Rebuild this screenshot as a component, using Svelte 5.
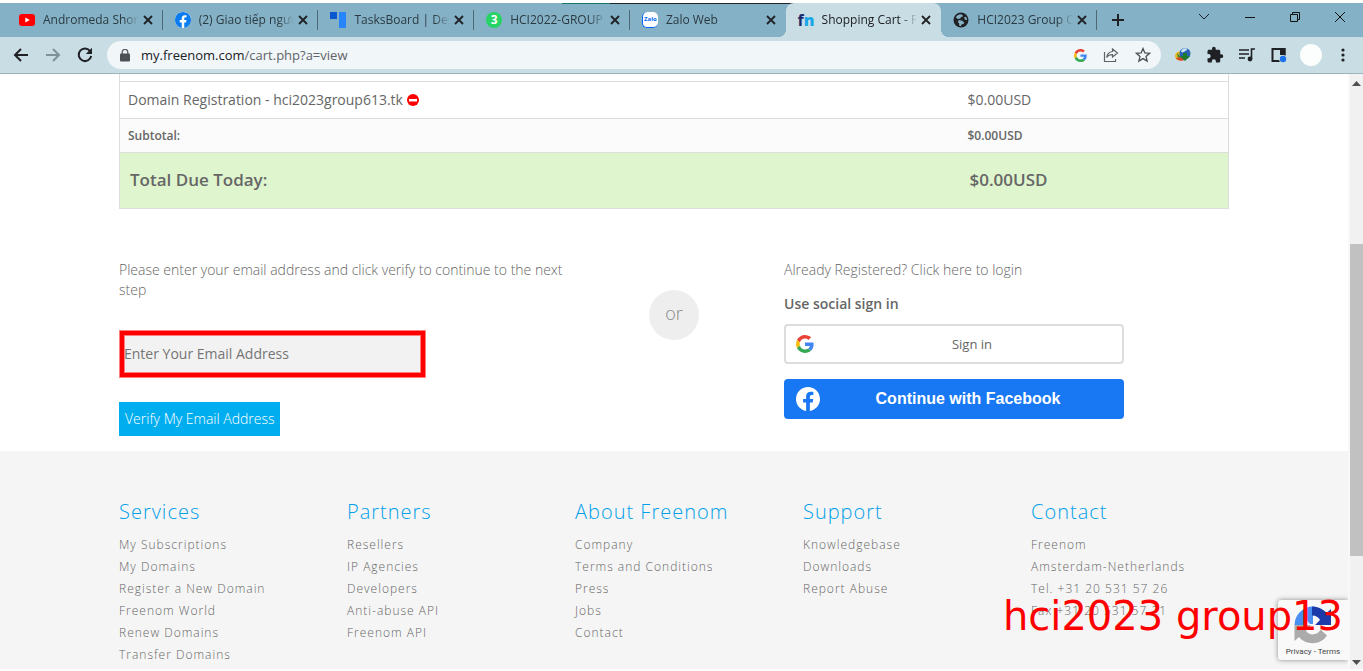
<script>
  const tabs = [
    { title: 'Andromeda Short', icon: 'youtube' },
    { title: '(2) Giao tiếp người', icon: 'facebook' },
    { title: 'TasksBoard | Desk', icon: 'tasks' },
    { title: 'HCI2022-GROUP', icon: 'three' },
    { title: 'Zalo Web', icon: 'zalo' },
    { title: 'Shopping Cart - F', icon: 'freenom', active: true },
    { title: 'HCI2023 Group C', icon: 'globe' },
  ];

  const footer = [
    {
      heading: 'Services',
      links: ['My Subscriptions', 'My Domains', 'Register a New Domain', 'Freenom World', 'Renew Domains', 'Transfer Domains'],
    },
    { heading: 'Partners', links: ['Resellers', 'IP Agencies', 'Developers', 'Anti-abuse API', 'Freenom API'] },
    { heading: 'About Freenom', links: ['Company', 'Terms and Conditions', 'Press', 'Jobs', 'Contact'] },
    { heading: 'Support', links: ['Knowledgebase', 'Downloads', 'Report Abuse'] },
  ];
  const contact = ['Freenom', 'Amsterdam-Netherlands', 'Tel. +31 20 531 57 26', 'Fax +31 20 531 57 21'];

  let email = $state('');
</script>

{#snippet googleLogo(size)}
  <svg width={size} height={size} viewBox="0 0 48 48" aria-hidden="true">
    <path fill="#ea4335" d="M24 9.5c3.54 0 6.71 1.22 9.21 3.6l6.85-6.85C35.9 2.38 30.47 0 24 0 14.62 0 6.51 5.38 2.56 13.22l7.98 6.19C12.43 13.72 17.74 9.5 24 9.5z" />
    <path fill="#4285f4" d="M46.98 24.55c0-1.57-.15-3.09-.38-4.55H24v9.02h12.94c-.58 2.96-2.26 5.48-4.78 7.18l7.73 6c4.51-4.18 7.09-10.36 7.09-17.65z" />
    <path fill="#fbbc05" d="M10.53 28.59c-.48-1.45-.76-2.99-.76-4.59s.27-3.14.76-4.59l-7.98-6.19C.92 16.46 0 20.12 0 24s.92 7.54 2.56 10.78l7.97-6.19z" />
    <path fill="#34a853" d="M24 48c6.48 0 11.93-2.13 15.89-5.81l-7.73-6c-2.15 1.45-4.92 2.3-8.16 2.3-6.26 0-11.57-4.22-13.47-9.91l-7.98 6.19C6.51 42.62 14.62 48 24 48z" />
  </svg>
{/snippet}

{#snippet facebookLogo(size, color)}
  <svg width={size} height={size} viewBox="0 0 24 24" aria-hidden="true">
    <path fill={color} d="M24 12.073C24 5.405 18.627 0 12 0S0 5.405 0 12.073c0 6.026 4.388 11.02 10.125 11.927v-8.437H7.078v-3.49h3.047V9.413c0-3.026 1.792-4.697 4.533-4.697 1.312 0 2.686.236 2.686.236v2.971H15.83c-1.491 0-1.956.93-1.956 1.886v2.264h3.328l-.532 3.49h-2.796V24C19.612 23.093 24 18.1 24 12.073z" />
  </svg>
{/snippet}

<div class="screen">
  <div class="topline"></div>
  <header class="browser">
    <div class="tabstrip">
      <nav class="tabs" aria-label="Tabs">
        {#each tabs as tab}
          <div class="tab" class:active={tab.active}>
            <span class="favicon">
              {#if tab.icon === 'youtube'}
                <svg width="16" height="16" viewBox="0 0 16 16"><rect y="2" width="16" height="12" rx="3" fill="#f00" /><path d="M6.3 5.4v5.2L10.7 8z" fill="#fff" /></svg>
              {:else if tab.icon === 'facebook'}
                <span class="fb-bg">{@render facebookLogo(16, '#0a7cf0')}</span>
              {:else if tab.icon === 'tasks'}
                <svg width="16" height="16" viewBox="0 0 16 16"><path d="M0 0h7v7H0z" fill="#0b57d0" /><path d="M9 0h7v16H9z" fill="#2684fc" /></svg>
              {:else if tab.icon === 'three'}
                <span class="three">3</span>
              {:else if tab.icon === 'zalo'}
                <span class="zalo">Zalo</span>
              {:else if tab.icon === 'freenom'}
                <span class="fn">f<b>n</b></span>
              {:else}
                <svg width="16" height="16" viewBox="0 0 16 16"><circle cx="8" cy="8" r="7.5" fill="#202124" /><path d="M7.5 2.2c-2 .1-3.800 1.500-4.700 3.200l2.100 1.500 2.200-.3 1-1.700 2-.7-.6-1.300zM5.800 8l3.500.8 1.900 1.600-.7 1.600-2 .5-.7 1.800-1.700-.7.1-2.200-1.400-1.500zM11 5.500l2-.8c.7 1 1 2 1 3.300l-2-.3z" fill="#84b1c5" /></svg>
              {/if}
            </span>
            <a class="tab-title" href="#tab">{tab.title}</a>
            <button class="close" aria-label="Close tab">
              <svg width="10" height="10" viewBox="0 0 10 10"><path d="M1 1l8 8M9 1L1 9" stroke="#202124" stroke-width="1.8" /></svg>
            </button>
          </div>
        {/each}
      </nav>
      <div class="window">
        <button class="new" aria-label="New tab">
          <svg width="12" height="12" viewBox="0 0 12 12"><path d="M6 0v12M0 6h12" stroke="#202124" stroke-width="2" /></svg>
        </button>
        <button aria-label="Search tabs"><svg width="12" height="12" viewBox="0 0 12 12"><path d="M1 3l5 5 5-5" fill="none" stroke="#202124" /></svg></button>
        <button aria-label="Minimize"><svg width="12" height="12" viewBox="0 0 12 12"><path d="M1 6.500h10" stroke="#111" /></svg></button>
        <button aria-label="Restore"><svg width="12" height="12" viewBox="0 0 12 12"><path d="M1.500 3.500h7v7h-7zM3.500 3.500v-2h7v7h-2" fill="none" stroke="#111" /></svg></button>
        <button aria-label="Close"><svg width="12" height="12" viewBox="0 0 12 12"><path d="M1 1l10 10M11 1L1 11" stroke="#111" /></svg></button>
      </div>
    </div>

    <div class="toolbar">
      <button aria-label="Back"><svg width="16" height="16" viewBox="0 0 16 16"><path d="M15 8H2M8 2L2 8l6 6" fill="none" stroke="#202124" stroke-width="2" /></svg></button>
      <button aria-label="Forward"><svg width="16" height="16" viewBox="0 0 16 16"><path d="M1 8h13M8 2l6 6-6 6" fill="none" stroke="#81919a" stroke-width="2" /></svg></button>
      <button aria-label="Reload"><svg width="16" height="16" viewBox="0 0 16 16"><path d="M13.200 4.200A6.300 6.300 0 1 0 14.200 9" fill="none" stroke="#202124" stroke-width="2" /><path d="M15 .8V7H8.800z" fill="#202124" /></svg></button>
      <div class="omnibox">
        <svg width="10" height="13" viewBox="0 0 10 13"><path d="M2.200 5V3.200a2.800 2.800 0 0 1 5.600 0V5" fill="none" stroke="#5f6368" stroke-width="1.400" /><rect y="4.500" width="10" height="8" rx="1" fill="#4c5054" /></svg>
        <span class="url">my.freenom.com<span>/cart.php?a=view</span></span>
        {@render googleLogo(13)}
        <svg width="16" height="16" viewBox="0 0 16 16"><path d="M1.500 5v9.500h11V12M9.500 2l5 4-5 4V7.700c-3 0-4.700.8-5.800 2.800.3-3.200 2.300-5.600 5.800-6z" fill="none" stroke="#5f6368" stroke-width="1.200" /></svg>
        <svg width="16" height="16" viewBox="0 0 16 16"><path d="M8 1.500l1.900 4.400 4.700.4-3.600 3.100 1.100 4.700L8 11.600l-4.100 2.500L5 9.400 1.400 6.300l4.700-.4z" fill="none" stroke="#4c5054" stroke-width="1.300" /></svg>
      </div>
      <button aria-label="Download manager">
        <svg width="16" height="16" viewBox="0 0 16 16"><ellipse cx="5" cy="9" rx="5" ry="4.500" fill="#e5b51c" /><path d="M1 11c2 3 6 3.500 9 1.500L8 9z" fill="#d8442b" /><path d="M2 6l5 5-4-1z" fill="#2b8a3a" /><circle cx="10" cy="6.500" r="5.500" fill="#2a62b8" /><path d="M6 4.500c1-3 4-4 6.500-2.500l-2 2-3 1.500z" fill="#c9e6f4" /><path d="M8 6h4v3h3l-5 5-5-5h3z" fill="#1f7a2c" /></svg>
      </button>
      <button aria-label="Extensions">
        <svg width="18" height="18" viewBox="0 0 24 24"><path fill="#202124" d="M20.500 11H19V7c0-1.100-.9-2-2-2h-4V3.500a2.500 2.500 0 0 0-5 0V5H4c-1.100 0-1.990.9-1.990 2v3.800H3.500c1.490 0 2.700 1.210 2.700 2.700s-1.210 2.700-2.700 2.700H2V20c0 1.100.9 2 2 2h3.800v-1.500c0-1.490 1.210-2.700 2.700-2.700s2.700 1.210 2.700 2.700V22H17c1.100 0 2-.9 2-2v-4h1.500a2.500 2.500 0 0 0 0-5z" /></svg>
      </button>
      <button aria-label="Media control">
        <svg width="16" height="16" viewBox="0 0 16 16"><path d="M0 3h10M0 7h10M0 11h6M12.500 12V2H16" fill="none" stroke="#202124" stroke-width="1.600" /><circle cx="11" cy="12" r="2.400" fill="#202124" /></svg>
      </button>
      <button aria-label="Side panel">
        <svg width="16" height="16" viewBox="0 0 16 16"><path d="M1.500 2h12v12h-12z" fill="none" stroke="#202124" stroke-width="2" /><path d="M9 1h5.500v7H9z" fill="#202124" /><circle cx="12" cy="12" r="4" fill="#c8dde4" /><circle cx="12" cy="12" r="3.200" fill="#1a73e8" /></svg>
      </button>
      <button class="avatar" aria-label="Profile"></button>
      <button aria-label="Menu"><svg width="4" height="14" viewBox="0 0 4 14"><g fill="#202124"><circle cx="2" cy="2" r="1.600" /><circle cx="2" cy="7" r="1.600" /><circle cx="2" cy="12" r="1.600" /></g></svg></button>
    </div>
  </header>

  <div class="viewport">
    <div class="page">
      <main class="container">
        <table>
          <tbody>
            <tr class="previous"><td></td><td></td></tr>
            <tr class="item">
              <td>
                Domain Registration - hci2023group613.tk
                <button class="remove" aria-label="Remove">
                  <svg width="12" height="12" viewBox="0 0 12 12"><circle cx="6" cy="6" r="6" fill="#f00" /><path d="M2 5h8v2.500H2z" fill="#fff" /></svg>
                </button>
              </td>
              <td>$0.00USD</td>
            </tr>
            <tr class="subtotal"><td>Subtotal:</td><td>$0.00USD</td></tr>
            <tr class="total"><td>Total Due Today:</td><td>$0.00USD</td></tr>
          </tbody>
        </table>

        <div class="checkout">
          <form class="verify" onsubmit={(e) => e.preventDefault()}>
            <label for="email">Please enter your email address and click verify to continue to the next step</label>
            <input id="email" type="email" placeholder="Enter Your Email Address" bind:value={email} />
            <button type="submit">Verify My Email Address</button>
          </form>
          <div class="or">or</div>
          <section class="social">
            <a href="#login">Already Registered? Click here to login</a>
            <h2>Use social sign in</h2>
            <button class="google">{@render googleLogo(18)}<span>Sign in</span></button>
            <button class="facebook">{@render facebookLogo(24, '#fff')}<span>Continue with Facebook</span></button>
          </section>
        </div>
      </main>

      <footer>
        <div class="container columns">
          {#each footer as column}
            <section>
              <h3>{column.heading}</h3>
              <ul>
                {#each column.links as link}<li><a href="#link">{link}</a></li>{/each}
              </ul>
            </section>
          {/each}
          <section>
            <h3>Contact</h3>
            <ul>
              {#each contact as line}<li>{line}</li>{/each}
            </ul>
          </section>
        </div>
      </footer>

      <aside class="captcha">
        <svg width="40" height="40" viewBox="0 0 40 40" aria-hidden="true">
          <path d="M20 1.500A18.500 18.500 0 0 0 1.500 20H11a9 9 0 0 1 2-5.500l4 4.500h3z" fill="#4a90f2" />
          <path d="M19 1.500c6 0 11 2.500 14.500 6.500L38 4v16H22l5-5c-1.500-3-4-4.500-8-4.500z" fill="#1c3aa9" />
          <path d="M1.500 20v16l4.500-4c7 8.500 21.500 8.500 28-1.500l-6.500-6c-3 6-11 6.500-14.500 1.500l5-6z" fill="#ababab" />
        </svg>
        <p><a href="#privacy">Privacy</a> - <a href="#terms">Terms</a></p>
      </aside>
    </div>

    <div class="scrollbar">
      <svg width="9" height="5" viewBox="0 0 9 5"><path d="M0 5l4.500-5L9 5z" fill="#505050" /></svg>
      <div class="thumb"></div>
      <svg width="9" height="5" viewBox="0 0 9 5"><path d="M0 0l4.500 5L9 0z" fill="#505050" /></svg>
    </div>
  </div>
  <div class="watermark">hci2023 group13</div>
</div>

<style>
  :global(body) { margin: 0; background: #fff; }
  * { box-sizing: border-box; }
  button { border: 0; padding: 0; background: none; font: inherit; color: inherit; cursor: pointer; }
  a { color: inherit; text-decoration: none; }
  svg { display: block; flex: none; }
  h2, h3, p, ul { margin: 0; padding: 0; font-weight: inherit; }
  ul { list-style: none; }

  .screen {
    position: relative;
    display: flex;
    flex-direction: column;
    height: 100vh;
    padding-bottom: 2px;
    overflow: hidden;
    font-family: 'Open Sans', sans-serif;
    color: #666;
  }
  .topline { flex: none; height: 3px; }

  .tabstrip { display: flex; height: 34px; padding-left: 7px; background: linear-gradient(90deg, transparent 562px, #1a7467 562px, #1a7467 610px, #20282c 610px, #20282c 803px, transparent 803px) 0 0 / 100% 1px no-repeat #84b1c5; }
  .tabs { display: flex; flex: 1; min-width: 0; }
  .tab { position: relative; flex: 1; min-width: 0; display: flex; align-items: center; padding: 0 10px 0 12px; color: #2b3a42; font-size: 12px; }
  .tab:not(.active)::after { content: ''; position: absolute; right: 0; top: 7px; width: 1px; height: 20px; background: #4f6a76; }
  .tab:nth-child(5)::after { display: none; }
  .tab.active { background: #c8dde4; border-radius: 8px 8px 0 0; color: #202124; }
  .tab.active::before, .tab.active::after { content: ''; position: absolute; bottom: 0; width: 8px; height: 8px; }
  .tab.active::before { left: -8px; background: radial-gradient(circle at 0 0, transparent 8px, #c8dde4 8px); }
  .tab.active::after { right: -8px; background: radial-gradient(circle at 100% 0, transparent 8px, #c8dde4 8px); }
  .favicon { flex: none; width: 16px; height: 16px; }
  .tab-title { flex: 1; min-width: 0; margin-left: 8px; overflow: hidden; white-space: nowrap; line-height: 18px; mask-image: linear-gradient(90deg, #000 calc(100% - 16px), transparent); }
  .close { flex: none; width: 10px; height: 10px; margin-left: 4px; }
  .fb-bg { display: block; border-radius: 8px; background: #fff; }
  .three { display: block; border-radius: 8px; background: #25d366; color: #fff; font-weight: 700; text-align: center; line-height: 16px; }
  .zalo { display: block; width: 16px; height: 16px; border-radius: 5px; background: #fff; color: #0068ff; font-size: 6px; font-weight: 700; text-align: center; line-height: 14px; border-bottom: 1px solid #0068ff; border-left: 1px solid #0068ff; }
  .fn { display: block; color: #1b2a6b; font: 700 16px/16px 'Open Sans', sans-serif; }
  .fn b { color: #1aa7e8; }

  .window { flex: none; display: flex; align-items: center; width: 266px; padding-bottom: 6px; }
  .window button { display: grid; place-items: center; width: 46px; height: 28px; }
  .window .new { width: 42px; margin-right: 43px; padding-top: 6px; }

  .toolbar { display: flex; align-items: center; height: 37px; padding: 0 4px 0 5px; background: #c8dde4; border-bottom: 1px solid #9fb3bc; }
  .toolbar > button { flex: none; display: grid; place-items: center; width: 32px; height: 32px; }
  .toolbar > .avatar { width: 22px; height: 22px; margin: 0 5px; border-radius: 50%; background: #fcfefd; }
  .omnibox { flex: 1; display: flex; align-items: center; gap: 16px; height: 28px; margin: 0 6px; padding: 0 10px 0 13px; border-radius: 14px; background: #f1f6f9; }
  .url { flex: 1; margin-left: -5px; color: #202124; font-size: 13px; line-height: 20px; }
  .url span { color: #5f6368; }

  .viewport { flex: 1; min-height: 0; display: flex; }
  .page { position: relative; flex: 1; min-width: 0; overflow: hidden; display: flex; flex-direction: column; }
  .container { width: 100%; max-width: 1110px; margin: 0 auto; }
  .scrollbar { flex: none; width: 15px; display: flex; flex-direction: column; align-items: center; padding: 7px 0 4px 2px; background: linear-gradient(90deg, #f8f8f8 2px, #f1f1f1 2px); }
  .thumb { flex: 1; width: 13px; margin: 158px 0 104px; background: #c1c1c1; }

  table { width: 100%; border-collapse: collapse; table-layout: fixed; }
  td { padding: 0 8px; border: 1px solid #ddd; border-width: 1px 0; text-align: left; }
  td:first-child { width: 840px; border-left-width: 1px; }
  td:last-child { border-right-width: 1px; }
  .previous td { height: 7px; border-top: 0; }
  .item td { height: 37px; font-size: 14px; line-height: 20px; }
  .subtotal td { height: 34px; background: #fbfbfb; font-size: 12px; font-weight: 600; }
  .total td { height: 56px; padding: 0 10px 2px; background: #dff5cd; font-size: 17px; font-weight: 600; }
  .remove { display: inline-block; vertical-align: -1px; }

  .checkout { display: grid; grid-template-columns: 1fr 220px 1fr; padding: 51px 0 15px; font-size: 14px; font-weight: 300; line-height: 20px; }
  .verify { display: flex; flex-direction: column; align-items: flex-start; }
  .verify input { width: 307px; height: 48px; margin: 30px 0 24px; padding: 0 4px; border: 1px solid #ff7f7f; border-radius: 0; box-shadow: inset 0 0 0 4px #f00, inset 0 0 0 5px #ff7f7f; background: #f2f2f2; color: #666; font: 14px/20px 'Open Sans', sans-serif; }
  .verify input::placeholder { color: #757575; opacity: 1; }
  .verify button { height: 34px; padding: 0 5px 0 6px; background: #00adef; color: #fff; }
  .or { justify-self: center; width: 50px; height: 50px; margin-top: 30px; border-radius: 50%; background: #eee; color: #888; font-size: 18px; line-height: 46px; text-align: center; }
  .social { display: flex; flex-direction: column; align-items: flex-start; }
  .social h2 { margin: 14px 0 10px; font-size: 14px; font-weight: 600; }
  .social button { display: flex; align-items: center; width: 100%; max-width: 340px; height: 40px; border-radius: 4px; }
  .social span { flex: 1; text-align: center; }
  .google { gap: 8px; padding: 0 0 0 10px; border: 2px solid #ddd; font-size: 13px; font-weight: 400; }
  .facebook { margin-top: 15px; padding: 0 8px 0 12px; background: #1877f2; color: #fff; font: 700 16px/20px 'Liberation Sans', sans-serif; }

  footer { flex: 1; background: #f5f5f5; font-weight: 300; letter-spacing: 1px; }
  .columns { display: grid; grid-template-columns: repeat(5, 1fr); gap: 30px; padding-top: 47px; }
  h3 { margin-bottom: 8px; color: #00a0e9; font-size: 20px; line-height: 28px; }
  li { font-size: 12px; line-height: 22px; white-space: nowrap; }

  .captcha { position: absolute; right: 0; bottom: 9px; width: 70px; height: 60px; padding-top: 5px; border-radius: 3px 0 0 3px; background: #f9f9f9; box-shadow: 0 0 5px #888; display: flex; flex-direction: column; align-items: center; }
  .captcha p { color: #444; font: 8px/14px Roboto, sans-serif; white-space: nowrap; }
  .watermark { position: absolute; right: 20px; bottom: 31px; color: #f00; font: 40px/48px 'DejaVu Sans', sans-serif; white-space: nowrap; pointer-events: none; }
</style>
